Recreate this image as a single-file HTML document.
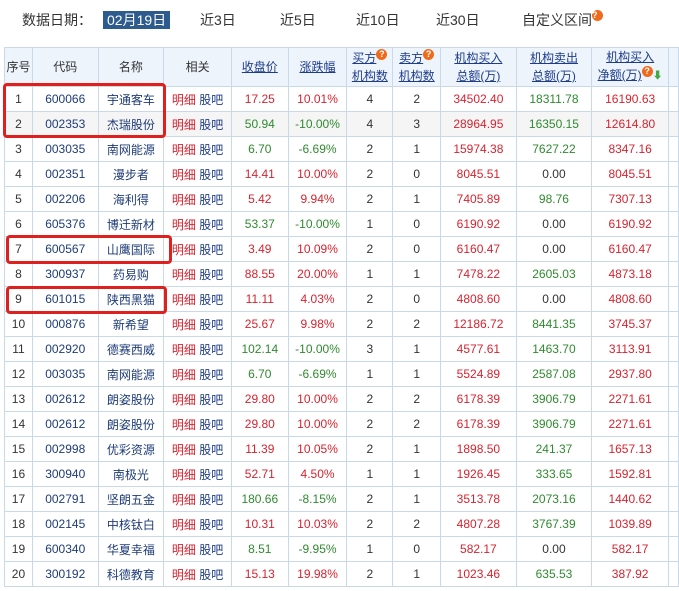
<!DOCTYPE html>
<html><head><meta charset="utf-8"><style>
body{margin:0;width:679px;height:591px;overflow:hidden;background:#fff;font-family:"Liberation Sans","Noto Sans CJK SC",sans-serif;font-size:12px;color:#333;position:relative}
.top{position:absolute;top:10px;font-size:14px;color:#333}
.sel{background:#2d5b8e;color:#fff;padding:1px 4px}
table{position:absolute;left:4px;top:47px;border-collapse:collapse;table-layout:fixed}
td{border:1px solid #c9d9ea;height:24px;text-align:center;padding:0;white-space:nowrap}
tr.h td{background:#edf4fc;height:38px;line-height:18px}
a{color:#1e3c8c;text-decoration:underline}
.r{color:#d6232f}.g{color:#2f8a2f}.c{color:#1e3c78}.b{color:#1e3c8c}
.q{display:inline-block;width:11px;height:11px;border-radius:50%;background:#f06a1a;color:#fff;font-size:9px;line-height:11px;font-weight:bold;vertical-align:top;text-decoration:none}
.box{position:absolute;border:3px solid #e0201e;border-radius:4px}
</style></head><body>
<div class="top" style="left:22px">数据日期：</div>
<div class="top" style="left:103px"><span class="sel">02月19日</span></div>
<div class="top" style="left:200px">近3日</div>
<div class="top" style="left:280px">近5日</div>
<div class="top" style="left:356px">近10日</div>
<div class="top" style="left:436px">近30日</div>
<div class="top" style="left:522px">自定义区间<span class="q">?</span></div>
<table>
<col style="width:28px"><col style="width:66px"><col style="width:66px"><col style="width:68px"><col style="width:57px"><col style="width:59px"><col style="width:46px"><col style="width:48px"><col style="width:76px"><col style="width:76px"><col style="width:77px"><col style="width:10px">
<tr class="h"><td>序号</td><td>代码</td><td>名称</td><td>相关</td><td><a>收盘价</a></td><td><a>涨跌幅</a></td><td><a>买方</a><span class="q">?</span><br><a>机构数</a></td><td><a>卖方</a><span class="q">?</span><br><a>机构数</a></td><td><a>机构买入</a><br><a>总额(万)</a></td><td><a>机构卖出</a><br><a>总额(万)</a></td><td><a>机构买入</a><br><a>净额(万)</a><span class="q">?</span><span style="color:#4a4;font-size:10px">⬇</span></td><td></td></tr>
<tr><td>1</td><td class="c">600066</td><td class="c">宇通客车</td><td><span class="r">明细</span> <span class="b">股吧</span></td><td class="r">17.25</td><td class="r">10.01%</td><td>4</td><td>2</td><td class="r">34502.40</td><td class="g">18311.78</td><td class="r">16190.63</td><td></td></tr>
<tr style="background:#f5f5f5"><td>2</td><td class="c">002353</td><td class="c">杰瑞股份</td><td><span class="r">明细</span> <span class="b">股吧</span></td><td class="g">50.94</td><td class="g">-10.00%</td><td>4</td><td>3</td><td class="r">28964.95</td><td class="g">16350.15</td><td class="r">12614.80</td><td></td></tr>
<tr><td>3</td><td class="c">003035</td><td class="c">南网能源</td><td><span class="r">明细</span> <span class="b">股吧</span></td><td class="g">6.70</td><td class="g">-6.69%</td><td>2</td><td>1</td><td class="r">15974.38</td><td class="g">7627.22</td><td class="r">8347.16</td><td></td></tr>
<tr><td>4</td><td class="c">002351</td><td class="c">漫步者</td><td><span class="r">明细</span> <span class="b">股吧</span></td><td class="r">14.41</td><td class="r">10.00%</td><td>2</td><td>0</td><td class="r">8045.51</td><td>0.00</td><td class="r">8045.51</td><td></td></tr>
<tr><td>5</td><td class="c">002206</td><td class="c">海利得</td><td><span class="r">明细</span> <span class="b">股吧</span></td><td class="r">5.42</td><td class="r">9.94%</td><td>2</td><td>1</td><td class="r">7405.89</td><td class="g">98.76</td><td class="r">7307.13</td><td></td></tr>
<tr><td>6</td><td class="c">605376</td><td class="c">博迁新材</td><td><span class="r">明细</span> <span class="b">股吧</span></td><td class="g">53.37</td><td class="g">-10.00%</td><td>1</td><td>0</td><td class="r">6190.92</td><td>0.00</td><td class="r">6190.92</td><td></td></tr>
<tr><td>7</td><td class="c">600567</td><td class="c">山鹰国际</td><td><span class="r">明细</span> <span class="b">股吧</span></td><td class="r">3.49</td><td class="r">10.09%</td><td>2</td><td>0</td><td class="r">6160.47</td><td>0.00</td><td class="r">6160.47</td><td></td></tr>
<tr><td>8</td><td class="c">300937</td><td class="c">药易购</td><td><span class="r">明细</span> <span class="b">股吧</span></td><td class="r">88.55</td><td class="r">20.00%</td><td>1</td><td>1</td><td class="r">7478.22</td><td class="g">2605.03</td><td class="r">4873.18</td><td></td></tr>
<tr><td>9</td><td class="c">601015</td><td class="c">陕西黑猫</td><td><span class="r">明细</span> <span class="b">股吧</span></td><td class="r">11.11</td><td class="r">4.03%</td><td>2</td><td>0</td><td class="r">4808.60</td><td>0.00</td><td class="r">4808.60</td><td></td></tr>
<tr><td>10</td><td class="c">000876</td><td class="c">新希望</td><td><span class="r">明细</span> <span class="b">股吧</span></td><td class="r">25.67</td><td class="r">9.98%</td><td>2</td><td>2</td><td class="r">12186.72</td><td class="g">8441.35</td><td class="r">3745.37</td><td></td></tr>
<tr><td>11</td><td class="c">002920</td><td class="c">德赛西威</td><td><span class="r">明细</span> <span class="b">股吧</span></td><td class="g">102.14</td><td class="g">-10.00%</td><td>3</td><td>1</td><td class="r">4577.61</td><td class="g">1463.70</td><td class="r">3113.91</td><td></td></tr>
<tr><td>12</td><td class="c">003035</td><td class="c">南网能源</td><td><span class="r">明细</span> <span class="b">股吧</span></td><td class="g">6.70</td><td class="g">-6.69%</td><td>1</td><td>1</td><td class="r">5524.89</td><td class="g">2587.08</td><td class="r">2937.80</td><td></td></tr>
<tr><td>13</td><td class="c">002612</td><td class="c">朗姿股份</td><td><span class="r">明细</span> <span class="b">股吧</span></td><td class="r">29.80</td><td class="r">10.00%</td><td>2</td><td>2</td><td class="r">6178.39</td><td class="g">3906.79</td><td class="r">2271.61</td><td></td></tr>
<tr><td>14</td><td class="c">002612</td><td class="c">朗姿股份</td><td><span class="r">明细</span> <span class="b">股吧</span></td><td class="r">29.80</td><td class="r">10.00%</td><td>2</td><td>2</td><td class="r">6178.39</td><td class="g">3906.79</td><td class="r">2271.61</td><td></td></tr>
<tr><td>15</td><td class="c">002998</td><td class="c">优彩资源</td><td><span class="r">明细</span> <span class="b">股吧</span></td><td class="r">11.39</td><td class="r">10.05%</td><td>2</td><td>1</td><td class="r">1898.50</td><td class="g">241.37</td><td class="r">1657.13</td><td></td></tr>
<tr><td>16</td><td class="c">300940</td><td class="c">南极光</td><td><span class="r">明细</span> <span class="b">股吧</span></td><td class="r">52.71</td><td class="r">4.50%</td><td>1</td><td>1</td><td class="r">1926.45</td><td class="g">333.65</td><td class="r">1592.81</td><td></td></tr>
<tr><td>17</td><td class="c">002791</td><td class="c">坚朗五金</td><td><span class="r">明细</span> <span class="b">股吧</span></td><td class="g">180.66</td><td class="g">-8.15%</td><td>2</td><td>1</td><td class="r">3513.78</td><td class="g">2073.16</td><td class="r">1440.62</td><td></td></tr>
<tr><td>18</td><td class="c">002145</td><td class="c">中核钛白</td><td><span class="r">明细</span> <span class="b">股吧</span></td><td class="r">10.31</td><td class="r">10.03%</td><td>2</td><td>2</td><td class="r">4807.28</td><td class="g">3767.39</td><td class="r">1039.89</td><td></td></tr>
<tr><td>19</td><td class="c">600340</td><td class="c">华夏幸福</td><td><span class="r">明细</span> <span class="b">股吧</span></td><td class="g">8.51</td><td class="g">-9.95%</td><td>1</td><td>0</td><td class="r">582.17</td><td>0.00</td><td class="r">582.17</td><td></td></tr>
<tr><td>20</td><td class="c">300192</td><td class="c">科德教育</td><td><span class="r">明细</span> <span class="b">股吧</span></td><td class="r">15.13</td><td class="r">19.98%</td><td>2</td><td>1</td><td class="r">1023.46</td><td class="g">635.53</td><td class="r">387.92</td><td></td></tr>
</table>
<div class="box" style="left:3px;top:83px;width:157px;height:49px"></div>
<div class="box" style="left:6px;top:235px;width:160px;height:23px"></div>
<div class="box" style="left:6px;top:286px;width:155px;height:22px"></div>
</body></html>
